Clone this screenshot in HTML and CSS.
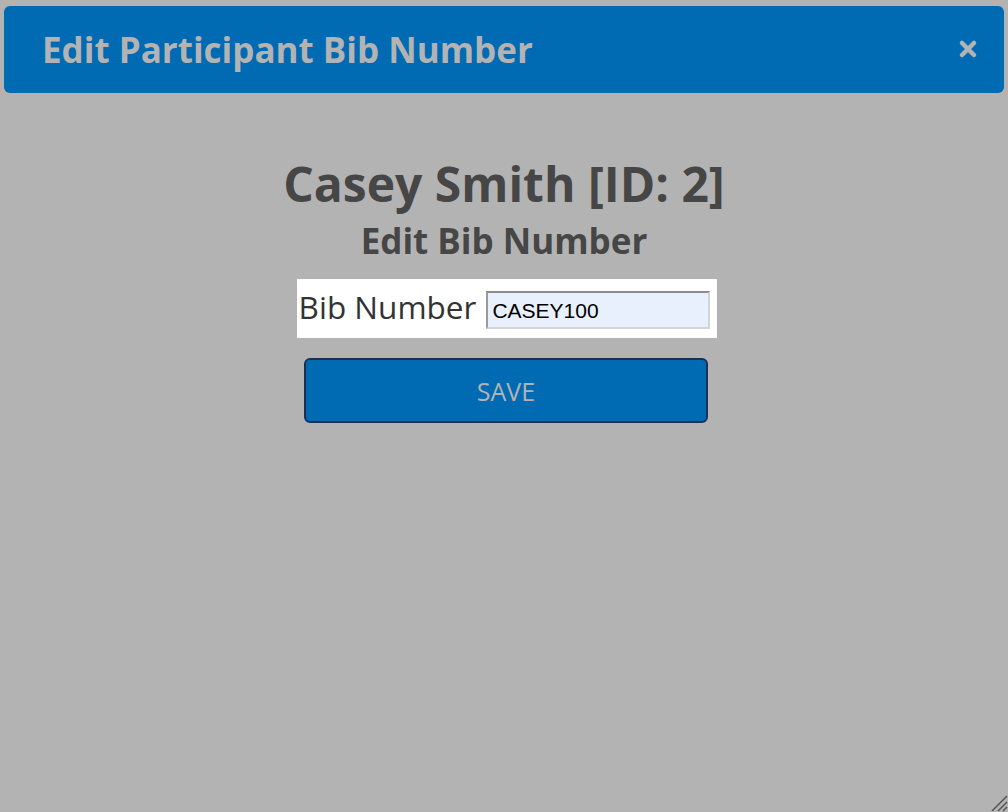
FILE: index.html
```html
<!DOCTYPE html>
<html>
<head>
  <title>Edit Participant Bib Number</title>
  <link rel="stylesheet" href="styles.css">
</head>
<body>
  <div class="dialog">
    <div class="dialog-header">
      <span class="dialog-title">Edit Participant Bib Number</span>
      <button class="close-btn" aria-label="Close">
        <svg width="20" height="20" viewBox="0 0 20 20">
          <path d="M4 4 L16 16 M16 4 L4 16" stroke="#b3b3b3" stroke-width="4.5" stroke-linecap="round"/>
        </svg>
      </button>
    </div>

    <div class="dialog-body">
      <h1 class="name">Casey Smith [ID: 2]</h1>
      <h2 class="subtitle">Edit Bib Number</h2>

      <div class="field-box">
        <label for="bib">Bib Number</label>
        <input type="text" id="bib" value="CASEY100" />
      </div>

      <button class="save-btn">SAVE</button>
    </div>

    <svg class="grip" width="20" height="20" viewBox="0 0 20 20">
      <path d="M4 19 L19 4 M10 19 L19 10 M15 19 L19 15" stroke="#555" stroke-width="1.5"/>
    </svg>
  </div>
</body>
</html>
```

FILE: styles.css
```css
body {
  margin: 0;
  background-color: #b3b3b3;
  font-family: "Open Sans", Arial, sans-serif;
  height: 812px;
  overflow: hidden;
}
.dialog {
  position: relative;
  height: 812px;
  padding: 6px 4px 0 4px;
  box-sizing: border-box;
}
.dialog-header {
  background-color: #006bb3;
  border-radius: 6px;
  height: 87px;
  display: flex;
  align-items: center;
  justify-content: space-between;
  padding: 0 26px 0 38px;
}
.dialog-title {
  color: #b3b3b3;
  font-size: 35px;
  font-weight: bold;
}
.close-btn {
  background: none;
  border: none;
  padding: 0;
  cursor: pointer;
  display: flex;
  margin-top: -2px;
}
.dialog-body {
  display: flex;
  flex-direction: column;
  align-items: center;
}
.name {
  margin: 61px 0 0 0;
  font-size: 48px;
  font-weight: bold;
  color: #464646;
  line-height: 60px;
}
.subtitle {
  margin: 0;
  font-size: 35px;
  font-weight: bold;
  color: #464646;
  line-height: 54px;
}
.field-box {
  margin-top: 11px;
  background: white;
  display: flex;
  align-items: center;
  gap: 10px;
  padding: 0 7px 0 2px;
  height: 59px;
  margin-left: 6px;
}
.field-box label {
  font-size: 31.5px;
  color: #333;
  margin-bottom: 5px;
}
.field-box input {
  width: 224px;
  height: 38px;
  box-sizing: border-box;
  background-color: #e8f0fe;
  border: 2px solid #d4d4d4;
  border-top-color: #8a8a8a;
  border-left-color: #9a9a9a;
  font-family: "Liberation Sans", Arial, sans-serif;
  font-size: 21px;
  color: #000;
  padding: 2px 4px 0;
  margin-top: 2px;
}
.save-btn {
  margin-top: 20px;
  width: 404px;
  height: 65px;
  background-color: #006bb3;
  border: 2px solid #1b2f52;
  border-radius: 6px;
  color: #b3b3b3;
  font-family: "Open Sans", Arial, sans-serif;
  font-size: 25px;
  cursor: pointer;
  margin-left: 4px;
}
.grip {
  position: absolute;
  right: 0;
  bottom: 0;
}
```
